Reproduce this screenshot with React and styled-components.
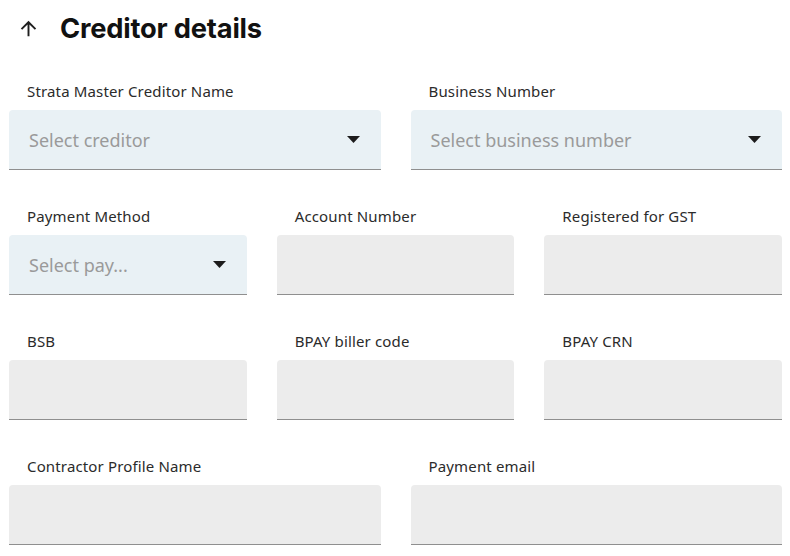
import React from "react"
import styled, { createGlobalStyle } from "styled-components"

const GlobalStyle = createGlobalStyle`
  body {
    margin: 0;
    background: #ffffff;
    font-family: "Noto Sans", "Open Sans", sans-serif;
  }
`

const Page = styled.div`
  width: 790px;
  padding: 0 8px 0 9px;
  box-sizing: border-box;
`

const Header = styled.div`
  display: flex;
  align-items: center;
  height: 56px;
  padding-left: 8px;
  gap: 20px;
`

const Title = styled.h1`
  margin: 0;
  font-family: Inter, sans-serif;
  font-size: 27.3px;
  font-weight: 700;
  color: #111;
  letter-spacing: -0.2px;
`

const Form = styled.div`
  display: flex;
  flex-direction: column;
  gap: 36px;
  padding-top: 25px;
`

const Row = styled.div`
  display: grid;
  grid-template-columns: repeat(${(p) => p.cols}, 1fr);
  column-gap: 30px;
`

const Field = styled.div`
  display: flex;
  flex-direction: column;
`

const Label = styled.label`
  font-size: 15px;
  letter-spacing: 0.15px;
  color: #2b2b2b;
  padding-left: 18px;
  line-height: 20px;
  margin-bottom: 9px;
`

const Box = styled.div`
  height: 59px;
  display: flex;
  align-items: center;
  justify-content: space-between;
  padding: 0 21px 0 20px;
  background: ${(p) => (p.select ? "#e9f1f5" : "#ececec")};
  border-bottom: 1px solid #8f8f8f;
  border-radius: 4px 4px 0 0;
`

const Placeholder = styled.span`
  font-size: 18px;
  color: #9a9a9a;
`

const Caret = () => (
  <svg width="13" height="7" viewBox="0 0 13 7">
    <path d="M0 0h13L6.5 7z" fill="#1c1c1c" />
  </svg>
)

const ArrowUp = () => (
  <svg width="23" height="23" viewBox="0 0 24 24">
    <path
      d="M4 12l1.41 1.41L11 7.83V20h2V7.83l5.58 5.59L20 12l-8-8-8 8z"
      fill="#1f1f1f"
    />
  </svg>
)

const rows = [
  [
    { label: "Strata Master Creditor Name", select: "Select creditor" },
    { label: "Business Number", select: "Select business number" },
  ],
  [
    { label: "Payment Method", select: "Select pay..." },
    { label: "Account Number" },
    { label: "Registered for GST" },
  ],
  [{ label: "BSB" }, { label: "BPAY biller code" }, { label: "BPAY CRN" }],
  [{ label: "Contractor Profile Name" }, { label: "Payment email" }],
]

const App = () => (
  <Page>
    <GlobalStyle />
    <Header>
      <ArrowUp />
      <Title>Creditor details</Title>
    </Header>
    <Form>
      {rows.map((row, i) => (
        <Row key={i} cols={row.length}>
          {row.map((f) => (
            <Field key={f.label}>
              <Label>{f.label}</Label>
              <Box select={!!f.select}>
                {f.select && (
                  <>
                    <Placeholder>{f.select}</Placeholder>
                    <Caret />
                  </>
                )}
              </Box>
            </Field>
          ))}
        </Row>
      ))}
    </Form>
  </Page>
)

export default App
